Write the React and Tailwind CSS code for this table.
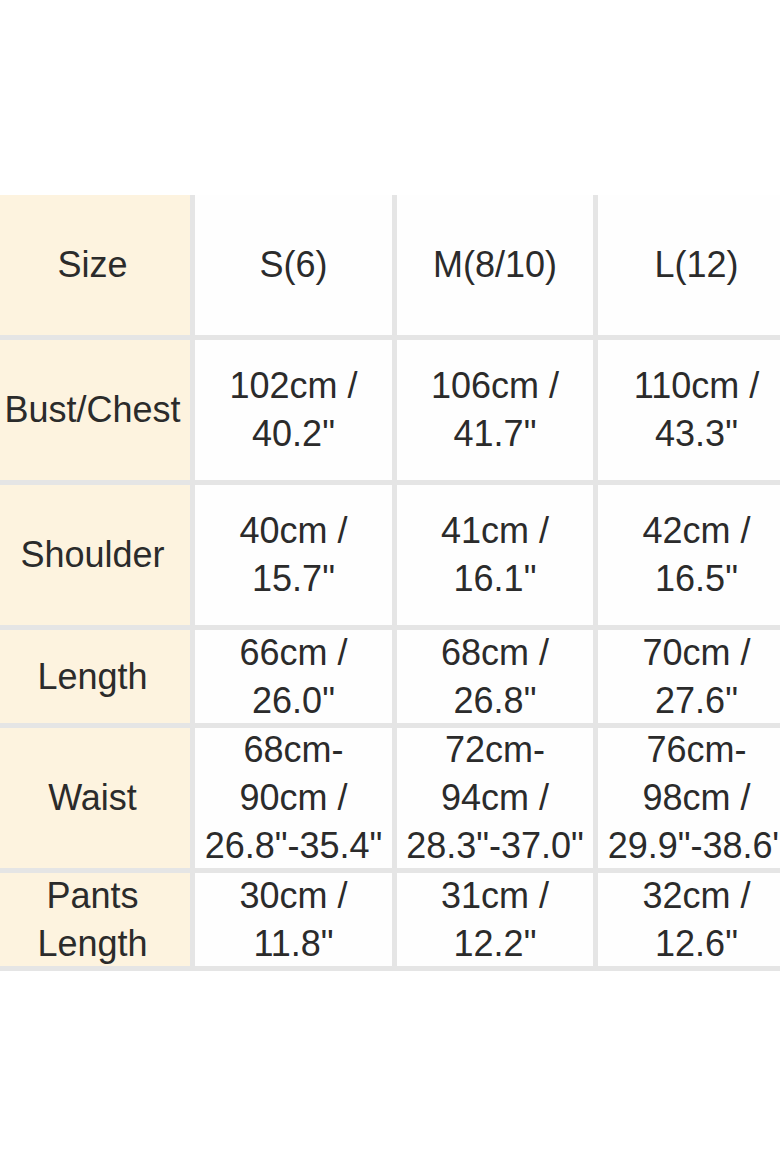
import { Fragment } from "react";

const columns = ["Size", "S(6)", "M(8/10)", "L(12)"];

const rows = [
  { label: ["Bust/Chest"], cells: [["102cm /", '40.2"'], ["106cm /", '41.7"'], ["110cm /", '43.3"']] },
  { label: ["Shoulder"], cells: [["40cm /", '15.7"'], ["41cm /", '16.1"'], ["42cm /", '16.5"']] },
  { label: ["Length"], cells: [["66cm /", '26.0"'], ["68cm /", '26.8"'], ["70cm /", '27.6"']] },
  {
    label: ["Waist"],
    cells: [
      ["68cm-", "90cm /", '26.8"-35.4"'],
      ["72cm-", "94cm /", '28.3"-37.0"'],
      ["76cm-", "98cm /", '29.9"-38.6"'],
    ],
  },
  { label: ["Pants", "Length"], cells: [["30cm /", '11.8"'], ["31cm /", '12.2"'], ["32cm /", '12.6"']] },
];

function Cell({ lines, first }) {
  return (
    <div
      className={
        "flex flex-col items-center justify-center text-center whitespace-nowrap " +
        (first ? "bg-[#fdf3df] pr-[5px]" : "bg-[#fefefe]")
      }
    >
      {lines.map((l) => (
        <span key={l}>{l}</span>
      ))}
    </div>
  );
}

export default function App() {
  return (
    <div className="w-[780px] h-[1170px] bg-white overflow-hidden pt-[195px]">
      <div
        className="grid grid-cols-[190px_197px_196px_197px] grid-rows-[140px_140px_140px_93px_140px_93px] gap-[5px] pb-[5px] bg-[#e5e5e5] w-[795px] text-[36px] leading-[48px] text-[#2b2b2b]"
        style={{ fontFamily: '"Liberation Sans", Arial, sans-serif' }}
      >
        {columns.map((c, i) => (
          <Cell key={c} lines={[c]} first={i === 0} />
        ))}
        {rows.map((r) => (
          <Fragment key={r.label.join()}>
            <Cell lines={r.label} first />
            {r.cells.map((lines, i) => (
              <Cell key={i} lines={lines} />
            ))}
          </Fragment>
        ))}
      </div>
    </div>
  );
}
